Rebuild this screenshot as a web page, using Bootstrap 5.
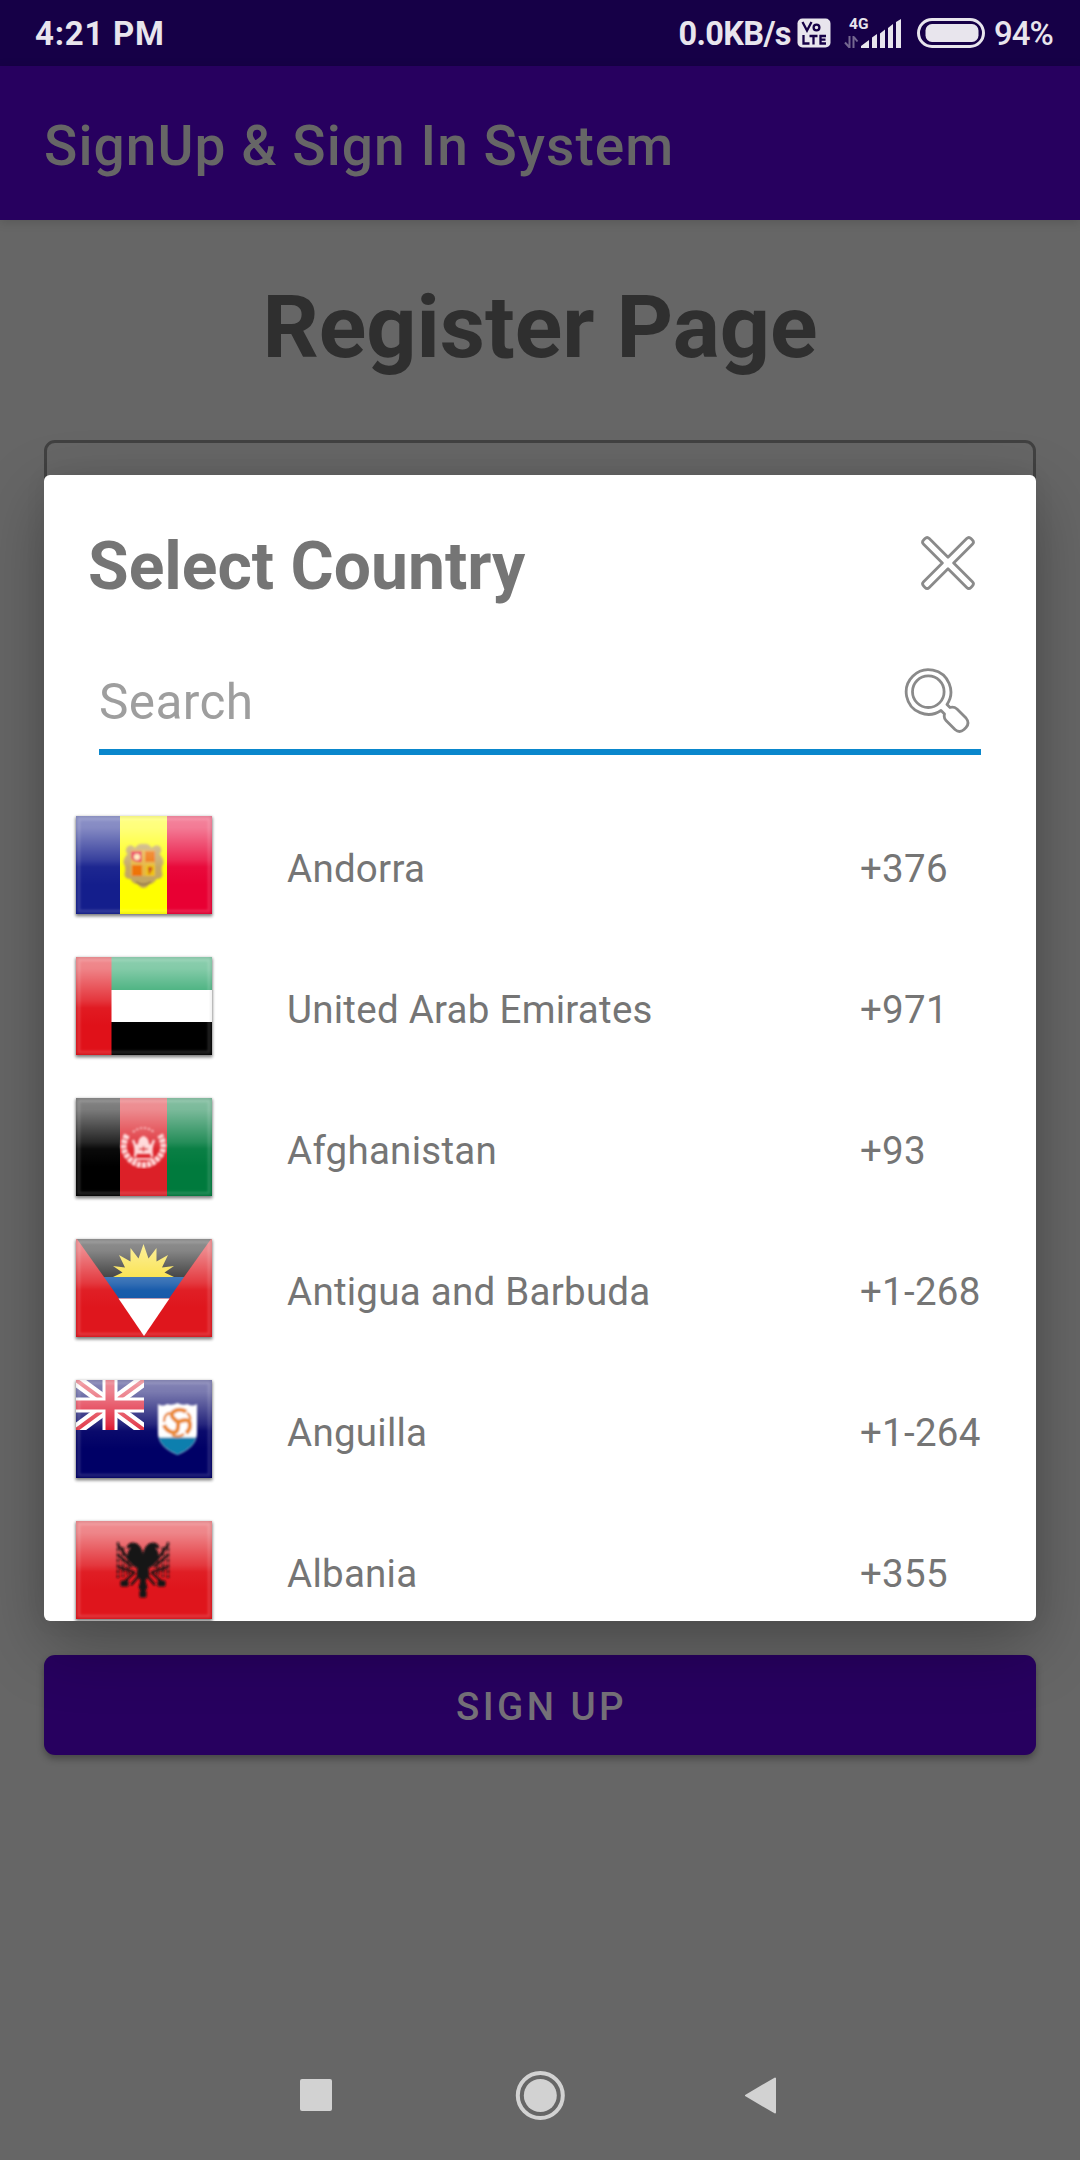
<!DOCTYPE html>
<html lang="en">
<head>
<meta charset="utf-8">
<meta name="viewport" content="width=device-width, initial-scale=1">
<title>SignUp &amp; Sign In System</title>
<link rel="stylesheet" href="https://cdn.jsdelivr.net/npm/bootstrap@5.3.0/dist/css/bootstrap.min.css">
<style>
  body { font-family: Roboto, "Liberation Sans", sans-serif; background: #666; color: #757575; }
  svg { display: block; flex: none; }
  .screen { width: 1080px; height: 2160px; }
  .status-bar { height: 66px; background: #160047; color: #e8e5ed; padding: 0 27px 0 35px; font-size: 33px; line-height: 66px; font-weight: 700; }
  .status-bar .clock { letter-spacing: .75px; padding-top: 2px; }
  .status-bar .rate { font-size: 32.5px; letter-spacing: -.65px; margin-right: 6px; padding-top: 1px; }
  .status-bar .charge { font-weight: 500; letter-spacing: -.9px; margin-left: 9px; padding-top: 1px; }
  .app-bar { height: 154px; background: #27005f; color: #666; padding: 6px 44px 0; font-size: 55px; font-weight: 500; letter-spacing: 1.08px; box-shadow: 0 2px 10px rgba(0,0,0,.15); }
  .page-title { font-size: 88px; line-height: 104px; font-weight: 700; color: #2f2f2f; margin: 55px 0 61px; }
  .form-area { padding: 0 44px; height: 1315px; }
  .country-field { height: 154px; border: 3px solid #414141; border-radius: 11px; background: transparent; }
  .signup-btn { height: 100px; border: 0; border-radius: 11px; background: #27005f; color: #757078; font-size: 38.5px; font-weight: 500; letter-spacing: 3.43px; padding: 4px 0 0 3px; box-shadow: 0 4px 7px rgba(0,0,0,.3); }
  .nav-keys { height: 129px; }
  .picker { left: 44px; top: 475px; width: 992px; height: 1146px; border-radius: 6px; background: #fff; box-shadow: 0 24px 66px rgba(0,0,0,.28), 0 0 22px rgba(0,0,0,.06); }
  .picker-head { height: 182px; padding: 2px 60px 0 44px; }
  .picker-head h2 { font-size: 66px; line-height: 78px; font-weight: 700; }
  .search-line { height: 98px; margin: 0 55px 39px; border-bottom: 6px solid #0a87cc; padding-right: 11px; }
  .search-line span { font-size: 49.5px; letter-spacing: .4px; color: #9e9e9e; padding-bottom: 2px; }
  .country-list { height: 827px; }
  .country-row { height: 141px; font-size: 38.5px; letter-spacing: .26px; }
  .flag-cell { width: 243px; padding-left: 24px; }
  .country-name { width: 573px; padding-top: 8px; }
  .dial-code { padding-top: 8px; white-space: nowrap; }
</style>
<script src="https://cdn.jsdelivr.net/npm/bootstrap@5.3.0/dist/js/bootstrap.bundle.min.js"></script>
</head>
<body>
<svg width="0" height="0" class="position-absolute">
  <defs>
    <linearGradient id="shine" x1="0" y1="0" x2="0" y2="1">
      <stop offset="0" stop-color="#fff" stop-opacity=".52"/>
      <stop offset=".12" stop-color="#fff" stop-opacity=".48"/>
      <stop offset=".45" stop-color="#fff" stop-opacity=".15"/>
      <stop offset=".52" stop-color="#fff" stop-opacity=".04"/>
      <stop offset=".7" stop-color="#fff" stop-opacity="0"/>
    </linearGradient>
    <filter id="soft" x="-10%" y="-10%" width="120%" height="120%"><feGaussianBlur stdDeviation=".9"/></filter>
    <filter id="drop" x="-10%" y="-10%" width="120%" height="120%"><feGaussianBlur stdDeviation="1.8"/></filter>
    <clipPath id="jack"><rect width="68" height="50"/></clipPath>
    <g id="gloss">
      <rect width="136" height="98" fill="url(#shine)"/>
      <g filter="url(#soft)">
        <rect x="3" y="3" width="130" height="92" fill="none" stroke="#fff" stroke-opacity=".15" stroke-width="2.5"/>
        <rect x=".6" y=".6" width="134.800" height="96.800" fill="none" stroke="#000" stroke-opacity=".14" stroke-width="1.600"/>
      </g>
    </g>
    <rect id="shade" x="-.5" y="1.500" width="137" height="99" fill="#000" opacity=".45" filter="url(#drop)"/>
  </defs>
</svg>

<div class="screen position-relative overflow-hidden d-flex flex-column">
  <div class="status-bar d-flex align-items-center">
    <span class="clock me-auto">4:21 PM</span>
    <span class="rate">0.0KB/s</span>
    <svg width="34" height="30" viewBox="0 0 34 30">
      <rect x=".5" y=".5" width="33" height="29" rx="5" fill="#e8e5ed"/>
      <g fill="none" stroke="#160047" stroke-width="2.300"><path d="M5.500 4l4.500 8.500 4.500-8.500M6.500 17v8.500h6M12.500 18h8M16.500 17v9.500M29 18h-5.500v7.500h5.500M24 21.700h4.500"/><circle cx="19.500" cy="9.500" r="2.900"/></g>
    </svg>
    <svg class="ms-2 overflow-visible" width="64" height="36" viewBox="840 14 64 36">
      <text x="850" y="28" font-size="15.500" font-weight="700" fill="#e8e5ed">4G</text>
      <path d="M850.500 35v12M850.500 46.500l-4.500-5M854.500 47v-12M854.500 35.500l4 5" stroke="#746790" stroke-width="2" fill="none"/>
      <path d="M862 47v-2l8-6v8zM873 47v-10.500l5-3.500v14zM881 47v-14.500l5-4v18.500zM889 47v-20l5-4v24zM897 47v-26l5-3v29z" fill="#e8e5ed"/>
    </svg>
    <svg style="margin-left:14px" width="68" height="30" viewBox="0 0 68 30">
      <rect x="1.500" y="1.500" width="65" height="27" rx="13.500" fill="none" stroke="#e8e5ed" stroke-width="3"/>
      <rect x="8.500" y="6" width="53" height="18" rx="6.500" fill="#e8e5ed"/>
    </svg>
    <span class="charge">94%</span>
  </div>

  <header class="app-bar d-flex align-items-center">SignUp &amp; Sign In System</header>

  <h1 class="page-title text-center">Register Page</h1>
  <main class="form-area d-flex flex-column justify-content-between">
    <div class="country-field"></div>
    <button type="button" class="signup-btn w-100">SIGN UP</button>
  </main>

  <nav class="nav-keys mt-auto d-flex justify-content-center align-items-center">
    <svg width="480" height="60" viewBox="300 2066 480 60" fill="#d2d2d2">
      <rect x="300" y="2079" width="32" height="32" rx="2"/>
      <circle cx="540.300" cy="2095.500" r="16.500"/>
      <circle cx="540.300" cy="2095.500" r="22.500" fill="none" stroke="#d2d2d2" stroke-width="4"/>
      <path d="M746 2095.500l29-17v34z" stroke="#d2d2d2" stroke-width="2" stroke-linejoin="round"/>
    </svg>
  </nav>

  <section class="picker position-absolute" role="dialog" aria-label="Select Country">
    <div class="picker-head d-flex align-items-center justify-content-between">
      <h2 class="mb-0">Select Country</h2>
      <svg class="mb-2" width="56" height="56" viewBox="-28 -28 56 56" fill="none" stroke="#8a8a8a" stroke-width="2.800" stroke-linejoin="round">
        <path transform="rotate(45)" d="M-4-4V-30.500q0-3 3-3h2q3 0 3 3V-4H30.500q3 0 3 3v2q0 3-3 3H4V30.500q0 3-3 3h-2q-3 0-3-3V4H-30.500q-3 0-3-3v-2q0-3 3-3z"/>
      </svg>
    </div>
    <div class="search-line d-flex align-items-center justify-content-between">
      <span>Search</span>
      <svg style="margin-bottom:6px" width="66" height="66" viewBox="904 667 66 66" fill="none" stroke="#8a8a8a" stroke-width="2.800" stroke-linejoin="round">
        <circle cx="928.300" cy="691.700" r="15.800"/>
        <path d="M941 710.500A22.300 22.300 0 1 1 947 704.500L950 707.500Q954 706.500 957 709L966 718Q970 723 966 727.500L964 729.500Q959.500 733.500 955 729.500L946 720.500Q943.500 718 944.500 714Z"/>
      </svg>
    </div>

    <div class="country-list overflow-hidden">
      <div class="country-row d-flex align-items-center">
        <div class="flag-cell"><svg width="152" height="114" viewBox="-8 -8 152 114">
          <use href="#shade"/>
          <path fill="#141e8c" d="M0 0h44v98H0z"/><path fill="#ff0" d="M44 0h47v98H44z"/><path fill="#e80033" d="M91 0h45v98H91z"/>
          <g filter="url(#soft)">
            <path d="M51 31q4-4 8 1 4-5 8.500-4 5-1 8 4 5-5 9-1 2 4-1 7 4 4 4 9-3 5-1 11 0 5-6 5-3 5-7 5-3 4-6 4t-6-4q-5 0-7-5-6 0-6-5 2-6-1-11 0-5 4-9-3-3-.5-7z" fill="#c2a560"/>
            <path d="M55 34h24v26H55z" fill="#e5b53c"/>
            <path d="M55 35h11v11q-11 1-11-6z" fill="#e92b47"/><circle cx="61" cy="41" r="3" fill="#ffe9b5"/>
            <path d="M69 35h10v11h-10zM56 49h10v11H56z" fill="#ef7000"/><path d="M70 49h9v11h-9z" fill="#efc111"/><path d="M72 51q6-1 4 3l-3 5z" fill="#cf4912"/>
            <path d="M60 66q7 5 15 0" stroke="#947a48" stroke-width="2" fill="none"/>
          </g>
          <use href="#gloss"/></svg></div>
        <div class="country-name">Andorra</div><div class="dial-code">+376</div>
      </div>

      <div class="country-row d-flex align-items-center">
        <div class="flag-cell"><svg width="152" height="114" viewBox="-8 -8 152 114">
          <use href="#shade"/>
          <path fill="#119a58" d="M35 0h101v33H35z"/><path fill="#fff" d="M35 33h101v32H35z"/><path fill="#000" d="M35 65h101v33H35z"/><path fill="#e01119" d="M0 0h35.500v98H0z"/>
          <use href="#gloss"/></svg></div>
        <div class="country-name">United Arab Emirates</div><div class="dial-code">+971</div>
      </div>

      <div class="country-row d-flex align-items-center">
        <div class="flag-cell"><svg width="152" height="114" viewBox="-8 -8 152 114">
          <use href="#shade"/>
          <path fill="#000" d="M0 0h44v98H0z"/><path fill="#dc2028" d="M44 0h47v98H44z"/><path fill="#007a3d" d="M91 0h45v98H91z"/>
          <g filter="url(#soft)" fill="none" stroke="#ffd5d5">
            <path d="M51 37q-7 13 1 22 6 8 15.500 8t15.500-8q8-9 1-22" stroke-width="6" stroke-dasharray="4 1"/>
            <path d="M57 34q10-8 21 0" stroke-width="1.500" stroke-dasharray="2 2"/>
            <path d="M57 42q4 8 2 17M78 42q-4 8-2 17" stroke-width="2.500"/>
            <path d="M60 55v-7l3-2q0-5 4.500-7 4.500 2 4.500 7l3 2v7zM58 61h19" fill="#ffd5d5" stroke-width="2"/>
            <path d="M67.500 48v6M63 51h9" stroke="#dc2028" stroke-width="1.500"/>
          </g>
          <use href="#gloss"/></svg></div>
        <div class="country-name">Afghanistan</div><div class="dial-code">+93</div>
      </div>

      <div class="country-row d-flex align-items-center">
        <div class="flag-cell"><svg width="152" height="114" viewBox="-8 -8 152 114">
          <use href="#shade"/>
          <path fill="#df161d" d="M0 0h136v98H0z"/><path fill="#151515" d="M1 0h134l-27 38H28z"/>
          <path fill="#f9dd28" d="M37 38L46.500 33.500 37 27 49 28.500 43 16 54.500 22.500 54.500 9 62.500 19.500 67.500 5 72.500 19.500 80.500 9 80.500 22.500 92 16 86 28.500 98 27 88.500 33.500 98 38z"/>
          <path fill="#1156a8" d="M28 38h80L93 59.500H43z"/><path fill="#fff" d="M42.500 59.500h51L68 97z"/>
          <use href="#gloss"/></svg></div>
        <div class="country-name">Antigua and Barbuda</div><div class="dial-code">+1-268</div>
      </div>

      <div class="country-row d-flex align-items-center">
        <div class="flag-cell"><svg width="152" height="114" viewBox="-8 -8 152 114">
          <use href="#shade"/>
          <path fill="#000066" d="M0 0h136v98H0z"/>
          <g clip-path="url(#jack)" fill="none">
            <path d="M0 0l68 50M68 0L0 50" stroke="#fff" stroke-width="12"/><path d="M0 0l68 50M68 0L0 50" stroke="#df2638" stroke-width="4"/>
            <path d="M34 0v50M0 25h68" stroke="#fff" stroke-width="15"/><path d="M34 0v50M0 25h68" stroke="#dc0b24" stroke-width="9"/>
          </g>
          <use href="#gloss"/>
          <g filter="url(#soft)">
            <path d="M82 24q5 3 9 0 5 2 10.500-1 5 3 10 1 5 3 9.500 0v29q0 14-19.500 22Q82 67 82 53z" fill="#fff"/>
            <path d="M82.500 57.500h38q-3 11-19 17.500-16-6.500-19-17.500z" fill="#0b7fae"/>
            <g fill="none" stroke="#ea8a35" stroke-width="4.200"><path d="M102 42q-12-8-1-12 6-1 9 2"/><path d="M102 42q12-5 12 3 0 5-4 8"/><path d="M102 42q1 13-7 10-5-2-7-7"/><path d="M88 42q0-8 6-9M96 55q7 3 12-1M111 33q4 3 3 7" stroke-width="2.500"/></g>
          </g></svg></div>
        <div class="country-name">Anguilla</div><div class="dial-code">+1-264</div>
      </div>

      <div class="country-row d-flex align-items-center">
        <div class="flag-cell"><svg width="152" height="114" viewBox="-8 -8 152 114">
          <use href="#shade"/>
          <path fill="#df151c" d="M0 0h136v98H0z"/>
          <use href="#gloss"/>
          <g filter="url(#soft)" fill="#151313" stroke="#151313">
            <path d="M67 35q-2-13-10-13-5 0-6 5l5-1q-5 4-4 10 2 8 10 11l-1 8 4 4-2 8 4 4 4-4-2-8 4-4-1-8q8-3 10-11 1-6-4-10l5 1q-1-5-6-5-8 0-10 13z"/>
            <path d="M42 21v36M47 26v30M52 34v20M92 21v36M87 26v30M82 34v20" stroke-width="2.600" stroke-dasharray="4 1.500" opacity=".7"/>
            <path d="M42 24l12 16M42 34l14 12M42 46l16 5M92 24L80 40M92 34L78 46M92 46l-16 5M59 51L47 62M75 51l12 11M62 56l-7 8M72 56l7 8" stroke-width="2.200" fill="none"/>
            <path d="M45 60h7v5h-7zM82 60h7v5h-7zM64 70h6v6h-6z"/>
          </g></svg></div>
        <div class="country-name">Albania</div><div class="dial-code">+355</div>
      </div>
    </div>
  </section>
</div>
</body>
</html>
